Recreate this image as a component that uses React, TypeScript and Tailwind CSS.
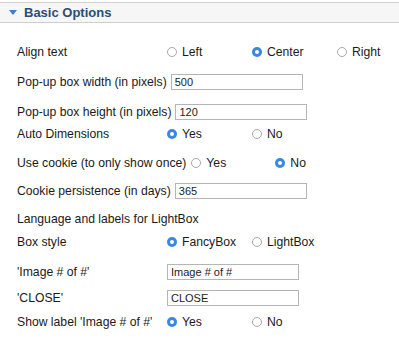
import React from "react";

const font = { fontFamily: '"Liberation Sans", Arial, sans-serif' };

const Radio = ({ checked, label, w = "w-[85px]" }: { checked?: boolean; label: string; w?: string }) => (
  <div className={`flex items-center ${w} shrink-0`}>
    {checked ? (
      <span className="ml-[1px] flex h-[10px] w-[10px] items-center justify-center rounded-full bg-[#3a87e6]">
        <span className="h-[4px] w-[4px] rounded-full bg-white" />
      </span>
    ) : (
      <span className="ml-[1px] h-[10px] w-[10px] rounded-full border border-[#a8a8a8] bg-white" />
    )}
    <span className="ml-[5px]">{label}</span>
  </div>
);

const TextBox = ({ value, className = "" }: { value: string; className?: string }) => (
  <div
    className={`flex h-[16px] w-[132px] items-center border border-[#b5b5b5] bg-white pl-[3px] text-[11px] text-[#222] ${className}`}
  >
    {value}
  </div>
);

const Row = ({ mt, children }: { mt: string; children: React.ReactNode }) => (
  <div className={`flex h-[20px] items-center whitespace-nowrap ${mt}`}>{children}</div>
);

export default function App() {
  return (
    <div className="h-[344px] w-[399px] overflow-hidden bg-white text-[12.2px] text-[#1a1a1a]" style={font}>
      <div className="mt-[2px] flex h-[21px] items-center border-y border-[#cfcfcf] bg-[#f6f6f6]">
        <svg width="8" height="6" viewBox="0 0 8 6" className="ml-[9px]">
          <path d="M0 0 L8 0 L4 5 Z" fill="#3d7fc4" />
        </svg>
        <span className="ml-[7px] text-[13px] font-bold text-[#2b4d79]">Basic Options</span>
      </div>

      <div className="pl-[17px]">
        <Row mt="mt-[19px]">
          <span className="w-[149px] shrink-0">Align text</span>
          <Radio label="Left" />
          <Radio checked label="Center" />
          <Radio label="Right" w="w-auto" />
        </Row>
        <Row mt="mt-[10px]">
          <span>Pop-up box width (in pixels)</span>
          <TextBox value="500" className="ml-[4px]" />
        </Row>
        <Row mt="mt-[10px]">
          <span>Pop-up box height (in pixels)</span>
          <TextBox value="120" className="ml-[4px]" />
        </Row>
        <Row mt="mt-[2px]">
          <span className="w-[149px] shrink-0">Auto Dimensions</span>
          <Radio checked label="Yes" />
          <Radio label="No" />
        </Row>
        <Row mt="mt-[9px]">
          <span>Use cookie (to only show once)</span>
          <Radio label="Yes" w="w-[84px] ml-[4px]" />
          <Radio checked label="No" />
        </Row>
        <Row mt="mt-[8px]">
          <span>Cookie persistence (in days)</span>
          <TextBox value="365" className="ml-[4px]" />
        </Row>
        <Row mt="mt-[8px]">
          <span>Language and labels for LightBox</span>
        </Row>
        <Row mt="mt-[3px]">
          <span className="w-[149px] shrink-0">Box style</span>
          <Radio checked label="FancyBox" />
          <Radio label="LightBox" />
        </Row>
        <Row mt="mt-[10px]">
          <span className="w-[150px] shrink-0">'Image # of #'</span>
          <TextBox value="Image # of #" />
        </Row>
        <Row mt="mt-[6px]">
          <span className="w-[150px] shrink-0">'CLOSE'</span>
          <TextBox value="CLOSE" />
        </Row>
        <Row mt="mt-[4px]">
          <span className="w-[149px] shrink-0">Show label 'Image # of #'</span>
          <Radio checked label="Yes" />
          <Radio label="No" />
        </Row>
      </div>
    </div>
  );
}
